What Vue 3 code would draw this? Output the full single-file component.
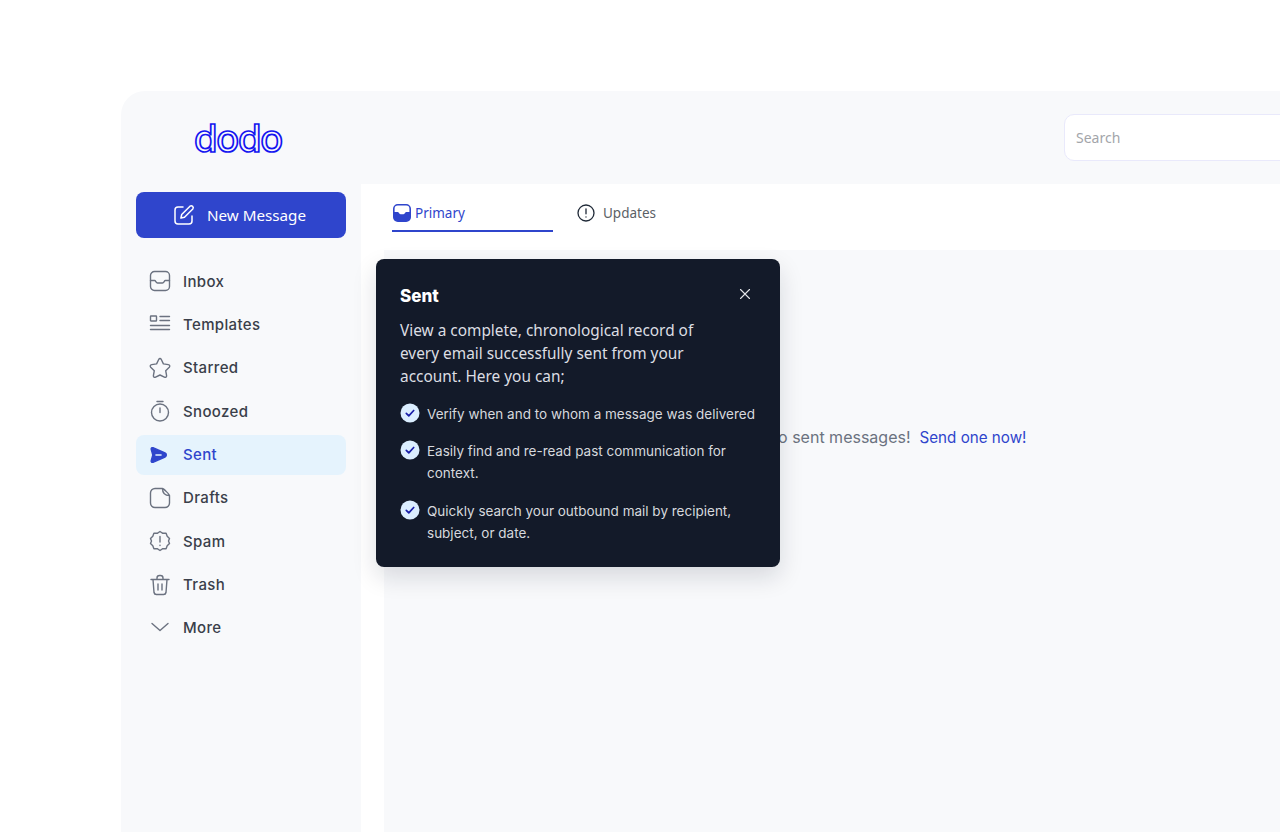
<script setup>
const folders = [
  { name: "Inbox", icon: "inbox" },
  { name: "Templates", icon: "templates" },
  { name: "Starred", icon: "star" },
  { name: "Snoozed", icon: "timer" },
  { name: "Sent", icon: "sent", active: true },
  { name: "Drafts", icon: "drafts" },
  { name: "Spam", icon: "spam" },
  { name: "Trash", icon: "trash" },
  { name: "More", icon: "more" },
];

const points = [
  "Verify when and to whom a message was delivered",
  "Easily find and re-read past communication for context.",
  "Quickly search your outbound mail by recipient, subject, or date.",
];
</script>

<template>
  <div class="page">
    <div class="panel">
      <header class="topbar">
        <div class="logo">dodo</div>
        <div class="search">Search</div>
      </header>
      <div class="body">
        <aside class="sidebar">
          <button class="new-message">
            <svg width="22" height="22" viewBox="0 0 22 22" fill="none" stroke="#fff" stroke-width="1.5" stroke-linecap="round" stroke-linejoin="round">
              <path d="M10 3H5a3 3 0 0 0-3 3v11a3 3 0 0 0 3 3h11a3 3 0 0 0 3-3v-5" />
              <path d="M17 2.2a2 2 0 0 1 2.8 2.8l-8.3 8.3-3.6.8.8-3.6z" />
            </svg>
            New Message
          </button>
          <nav class="folders">
            <div v-for="f in folders" :key="f.name" :class="['folder', { active: f.active }]">
              <span class="folder-icon">
                <svg width="22" height="22" viewBox="0 0 22 22" fill="none" stroke="#6b7280" stroke-width="1.4" stroke-linecap="round" stroke-linejoin="round">
                  <template v-if="f.icon === 'inbox'">
                    <rect x="1.5" y="1.5" width="19" height="19" rx="4" />
                    <path d="M1.5 10.500h4.200c1 0 1.300 2.500 2.800 2.500h5c1.500 0 1.800-2.500 2.800-2.500h4.200" />
                  </template>
                  <template v-else-if="f.icon === 'templates'">
                    <rect x="1.500" y="3" width="6" height="5" rx="0.500" />
                    <path d="M11 3.500h9.500M11 7.500h9.500M1.500 12.500h19M1.500 16.500h19" />
                  </template>
                  <path v-else-if="f.icon === 'star'" d="M11 1.500c.6 0 1 .4 1.300 1l2.100 4.400 4.900.7c1.400.2 1.900 1.600 1 2.600l-3.600 3.500.9 4.900c.2 1.300-1.100 2.200-2.200 1.600L11 18l-4.400 2.200c-1.100.6-2.400-.3-2.200-1.600l.9-4.900-3.600-3.500c-.9-1-.4-2.400 1-2.600l4.900-.7 2.100-4.400c.3-.6.7-1 1.300-1z" />
                  <template v-else-if="f.icon === 'timer'">
                    <circle cx="11" cy="12.500" r="8.500" />
                    <path d="M8 1.500h6M11 8v4.500" />
                  </template>
                  <template v-else-if="f.icon === 'sent'">
                    <path d="M2.200 5.200c-.3-1.100.8-1.900 1.800-1.500l12 5.300c1.800.8 1.800 3.200 0 4L4 18.300c-1 .4-2.100-.4-1.800-1.500L3.800 11z" fill="#2f45cc" stroke="#2f45cc" />
                    <path d="M7 11h5" stroke="#e5f3fd" stroke-width="1.600" />
                  </template>
                  <path v-else-if="f.icon === 'drafts'" d="M6 1.500h7.500c1 0 7 6 7 7V16a4.500 4.500 0 0 1-4.500 4.500H6A4.500 4.500 0 0 1 1.500 16V6A4.500 4.500 0 0 1 6 1.500zM13.500 1.500c0 4 2 7 7 7" />
                  <template v-else-if="f.icon === 'spam'">
                    <path d="M11 1.500l2.800 1.800 3.300-.1 1.100 3 2.300 2.300-1 2.500 1 2.500-2.300 2.300-1.100 3-3.300-.1L11 20.500l-2.800-1.800-3.300.1-1.100-3-2.300-2.300 1-2.500-1-2.500 2.300-2.300 1.100-3 3.300.1z" />
                    <path d="M11 6.500v5.500M11 15.200v.3" />
                  </template>
                  <template v-else-if="f.icon === 'trash'">
                    <path d="M2 5.500h18M4 5.500l1 13a2.500 2.500 0 0 0 2.500 2h7a2.500 2.500 0 0 0 2.500-2l1-13M8 5.500V4a2.500 2.500 0 0 1 2.500-2.500h1A2.500 2.500 0 0 1 14 4v1.500M9 10v6M13 10v6" />
                  </template>
                  <path v-else d="M3 7.500L11 14.500l8-7" />
                </svg>
              </span>
              <span>{{ f.name }}</span>
            </div>
          </nav>
        </aside>
        <main class="main">
          <div class="tabs">
            <div class="tab tab-primary">
              <svg width="18" height="18" viewBox="0 0 18 18">
                <rect x="0.800" y="0.800" width="16.400" height="16.400" rx="4" fill="#fff" stroke="#2f45cc" stroke-width="1.600" />
                <path d="M1 8h3.800c1 0 1.200 2.200 2.700 2.200h3c1.500 0 1.700-2.200 2.700-2.200H17v6a3 3 0 0 1-3 3H4a3 3 0 0 1-3-3z" fill="#2f45cc" />
              </svg>
              Primary
            </div>
            <div class="tab tab-updates">
              <svg width="18" height="18" viewBox="0 0 18 18" fill="none" stroke="#1f2937" stroke-width="1.300" stroke-linecap="round">
                <circle cx="9" cy="9" r="8" />
                <path d="M9 4.800v5M9 12.800v.2" />
              </svg>
              Updates
            </div>
          </div>
          <div class="content">
            <p class="empty">No sent messages!&nbsp; <a>Send one now!</a></p>
          </div>
          <div class="tip">
            <div class="tip-head">
              <h3>Sent</h3>
              <svg width="12" height="12" viewBox="0 0 12 12" stroke="#e5e7eb" stroke-width="1.100" stroke-linecap="round">
                <path d="M1.500 1.500l9 9M10.500 1.500l-9 9" />
              </svg>
            </div>
            <p class="tip-text">View a complete, chronological record of every email successfully sent from your account. Here you can;</p>
            <ul class="tip-list">
              <li v-for="p in points" :key="p">
                <svg class="check" width="20" height="20" viewBox="0 0 20 20" fill="none">
                  <circle cx="10" cy="10" r="9.500" fill="#dbeeff" />
                  <path d="M6.300 10.300l2.500 2.500 4.900-5.300" stroke="#1a1fa8" stroke-width="1.700" stroke-linecap="round" stroke-linejoin="round" />
                </svg>
                <span>{{ p }}</span>
              </li>
            </ul>
          </div>
        </main>
      </div>
    </div>
  </div>
</template>

<style>
html,
body {
  background: #fff;
  overflow: hidden;
}
</style>

<style scoped>
.page {
  height: 832px;
  padding: 91px 0 0 121px;
  box-sizing: border-box;
  overflow: hidden;
}
.panel {
  width: 1240px;
  height: 900px;
  background: #f8f9fb;
  border-radius: 24px 0 0 0;
  display: flex;
  flex-direction: column;
}
.topbar {
  height: 93px;
  flex: none;
  display: flex;
  justify-content: space-between;
  align-items: center;
  padding-left: 73px;
  box-sizing: border-box;
}
.logo {
  font: 500 38px/40px Inter, sans-serif;
  color: #f8f9fb;
  -webkit-text-stroke: 1.7px #1414f0;
  letter-spacing: -1.2px;
  margin-top: 1px;
}
.search {
  width: 297px;
  height: 47px;
  box-sizing: border-box;
  background: #fff;
  border: 1px solid #e9e9fb;
  border-radius: 10px;
  padding-left: 11px;
  display: flex;
  align-items: center;
  font: 14px "Noto Sans", sans-serif;
  color: #a3a5aa;
}
.body {
  flex: 1;
  display: flex;
}
.sidebar {
  width: 240px;
  flex: none;
  padding: 8px 15px 0;
  box-sizing: border-box;
}
.new-message {
  width: 210px;
  height: 46px;
  background: #2f45cc;
  border: 0;
  border-radius: 8px;
  color: #fff;
  font: 15.2px "Noto Sans", sans-serif;
  display: flex;
  align-items: center;
  gap: 12px;
  padding: 0 0 0 37px;
}
.folders {
  margin-top: 23px;
  display: flex;
  flex-direction: column;
  gap: 3.400px;
}
.folder {
  height: 40px;
  display: flex;
  align-items: center;
  gap: 12px;
  padding-left: 13px;
  border-radius: 8px;
  width: 197px;
  font: 500 15px Inter, sans-serif;
  letter-spacing: 0.35px;
  color: #3a3f4a;
}
.folder:last-child {
  margin-top: -1px;
}
.folder.active {
  background: #e5f3fd;
  color: #2f45cc;
}
.folder-icon {
  width: 22px;
  height: 22px;
  display: block;
}
.folder-icon svg {
  display: block;
}
.main {
  flex: 1;
  position: relative;
  background: #fff;
  display: flex;
  flex-direction: column;
  min-width: 0;
}
.tabs {
  height: 66px;
  flex: none;
  display: flex;
  padding-left: 31px;
  box-sizing: border-box;
}
.tab {
  display: flex;
  align-items: center;
  gap: 8px;
  font: 13.5px "Noto Sans", sans-serif;
  color: #5b5f66;
}
.tab-primary {
  box-sizing: border-box;
  width: 161px;
  height: 48px;
  padding: 12px 0 0 1px;
  gap: 4px;
  color: #2f45cc;
  border-bottom: 2px solid #2f45cc;
}
.tab-updates {
  height: 58px;
  padding-left: 24px;
}
.content {
  flex: 1;
  margin-left: 23px;
  background: #f8f9fb;
}
.empty {
  margin: 177px 0 0;
  padding-left: 382px;
  font: 16px/20px Inter, sans-serif;
  color: #6b7280;
  white-space: nowrap;
}
.empty a {
  font-size: 15.200px;
  color: #2f45cc;
}
.tip {
  position: absolute;
  left: 15px;
  top: 75px;
  width: 404px;
  height: 308px;
  box-sizing: border-box;
  padding: 24px 24px 0;
  background: #131a29;
  border-radius: 8px;
  box-shadow: 0 10px 24px rgba(17, 24, 39, 0.14);
  color: #e5e7eb;
}
.tip-head {
  display: flex;
  justify-content: space-between;
  align-items: flex-start;
  padding-right: 5px;
}
.tip-head h3 {
  margin: 0;
  font: 800 17px/26px Inter, sans-serif;
  color: #fff;
}
.tip-head svg {
  margin-top: 5px;
}
.tip-text {
  margin: 10px 0 0;
  width: 320px;
  font: 15.4px/23px "Noto Sans", sans-serif;
  color: #dcdee3;
}
.tip-list {
  list-style: none;
  margin: 15px 0 0 -0.500px;
  padding: 0;
  display: flex;
  flex-direction: column;
  gap: 15.300px;
}
.tip-list li {
  display: flex;
  gap: 7.500px;
  font: 13.500px/22px Inter, sans-serif;
  color: #d6d8dd;
}
.check {
  flex: none;
}
</style>
